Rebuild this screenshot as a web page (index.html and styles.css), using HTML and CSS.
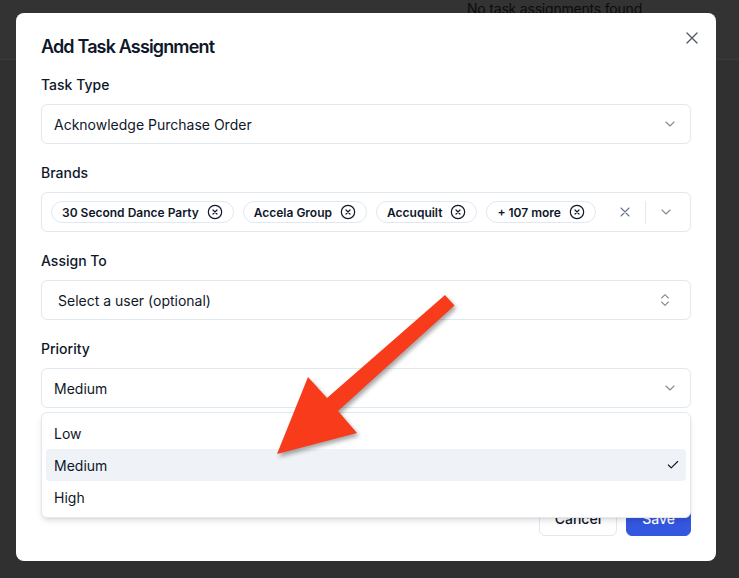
FILE: index.html
```html
<!DOCTYPE html>
<html lang="en">
<head>
    <meta charset="UTF-8">
    <meta name="viewport" content="width=device-width, initial-scale=1.0">
    <title>Add Task Assignment</title>
    <link rel="stylesheet" href="styles.css">
</head>
<body>
    <div class="page">
        <div class="page-header">
            <span class="empty-msg">No task assignments found</span>
        </div>
    </div>

    <div class="dialog">
        <button class="dialog-close" aria-label="Close">
            <svg width="12" height="12" viewBox="0 0 12 12"><path d="M1 1 11 11M11 1 1 11"/></svg>
        </button>
        <h2 class="dialog-title">Add Task Assignment</h2>

        <div class="field">
            <label>Task Type</label>
            <div class="trigger">
                <span>Acknowledge Purchase Order</span>
                <svg class="icon chevron" viewBox="0 0 24 24"><path d="m6 9 6 6 6-6"/></svg>
            </div>
        </div>

        <div class="field">
            <label>Brands</label>
            <div class="trigger multi">
                <div class="chips">
                    <span class="chip">30 Second Dance Party
                        <svg class="chip-x" viewBox="0 0 24 24"><circle cx="12" cy="12" r="10"/><path d="m15 9-6 6M9 9l6 6"/></svg>
                    </span>
                    <span class="chip">Accela Group
                        <svg class="chip-x" viewBox="0 0 24 24"><circle cx="12" cy="12" r="10"/><path d="m15 9-6 6M9 9l6 6"/></svg>
                    </span>
                    <span class="chip">Accuquilt
                        <svg class="chip-x" viewBox="0 0 24 24"><circle cx="12" cy="12" r="10"/><path d="m15 9-6 6M9 9l6 6"/></svg>
                    </span>
                    <span class="chip">+ 107 more
                        <svg class="chip-x" viewBox="0 0 24 24"><circle cx="12" cy="12" r="10"/><path d="m15 9-6 6M9 9l6 6"/></svg>
                    </span>
                </div>
                <div class="multi-actions">
                    <svg class="icon clear" viewBox="0 0 24 24"><path d="M18 6 6 18M6 6l12 12"/></svg>
                    <span class="separator"></span>
                    <svg class="icon chevron" viewBox="0 0 24 24"><path d="m6 9 6 6 6-6"/></svg>
                </div>
            </div>
        </div>

        <div class="field">
            <label>Assign To</label>
            <div class="trigger native">
                <span>Select a user (optional)</span>
                <svg class="icon updown" viewBox="0 0 24 24"><path d="m7 15 5 5 5-5M7 9l5-5 5 5"/></svg>
            </div>
        </div>

        <div class="field priority">
            <label>Priority</label>
            <div class="trigger">
                <span>Medium</span>
                <svg class="icon chevron" viewBox="0 0 24 24"><path d="m6 9 6 6 6-6"/></svg>
            </div>
            <div class="select-menu">
                <div class="option">Low</div>
                <div class="option active">Medium
                    <svg class="check" viewBox="0 0 24 24"><path d="M20 6 9 17l-5-5"/></svg>
                </div>
                <div class="option">High</div>
            </div>
        </div>

        <div class="dialog-footer">
            <button class="btn btn-outline">Cancel</button>
            <button class="btn btn-primary">Save</button>
        </div>
    </div>

    <svg class="arrow" width="739" height="578" viewBox="0 0 739 578">
        <polygon points="445,295 454.5,305.5 338,411 357,433 277,454 308,377 327,398"/>
    </svg>
</body>
</html>
```

FILE: styles.css
```css
body {
    margin: 0;
    font-family: Inter, "Noto Sans", sans-serif;
    background-color: #303030;
    color: #0f172a;
    width: 739px;
    height: 578px;
    overflow: hidden;
    position: relative;
}
.page-header {
    height: 59px;
    border-bottom: 1px solid #3a3a3a;
    background: #333;
    display: flex;
    padding-left: 467px;
}
.empty-msg {
    font-size: 14px;
    line-height: 20px;
    margin-top: -1px;
    letter-spacing: -0.2px;
    color: #0c0c0c;
}
.dialog {
    position: absolute;
    left: 16px;
    top: 13px;
    width: 700px;
    height: 548px;
    box-sizing: border-box;
    padding: 20px 25px 25px;
    background: #fff;
    border-radius: 8px;
    display: flex;
    flex-direction: column;
}
.dialog-close {
    position: absolute;
    top: 19px;
    right: 18px;
    border: none;
    background: none;
    padding: 0;
    width: 12px;
    height: 12px;
    display: flex;
}
.dialog-close svg {
    stroke: #555b66;
    stroke-width: 1.4;
    fill: none;
    stroke-linecap: round;
}
.dialog-title {
    margin: 0 0 14px;
    font-size: 18px;
    line-height: 28px;
    font-weight: 600;
    letter-spacing: -0.85px;
}
.field {
    display: flex;
    flex-direction: column;
    gap: 9px;
    margin-bottom: 19px;
}
.field label {
    font-size: 14px;
    line-height: 20px;
    font-weight: 500;
}
.trigger {
    height: 40px;
    box-sizing: border-box;
    border: 1px solid #e2e8f0;
    border-radius: 6px;
    padding: 0 12px;
    display: flex;
    align-items: center;
    justify-content: space-between;
    font-size: 14px;
}
.trigger.native {
    padding: 0 17px 0 16px;
}
.icon {
    width: 16px;
    height: 16px;
    fill: none;
    stroke: #0f172a;
    stroke-width: 2;
    stroke-linecap: round;
    stroke-linejoin: round;
}
.chevron {
    opacity: 0.5;
    stroke-width: 1.6;
}
.updown {
    opacity: 0.5;
    stroke-width: 1.6;
}
.trigger.multi {
    padding: 0 16px 0 9px;
}
.chips {
    display: flex;
    gap: 9px;
}
.chip {
    display: inline-flex;
    align-items: center;
    gap: 8px;
    height: 22px;
    box-sizing: border-box;
    padding: 0 10px;
    border: 1px solid #e2e8f0;
    border-radius: 11px;
    font-size: 12px;
    font-weight: 600;
    white-space: nowrap;
}
.chip-x {
    width: 16px;
    height: 16px;
    fill: none;
    stroke: #0f172a;
    stroke-width: 1.8;
    stroke-linecap: round;
}
.multi-actions {
    display: flex;
    align-items: center;
}
.clear {
    stroke: #64748b;
    stroke-width: 1.6;
}
.separator {
    width: 1px;
    height: 23px;
    background: #e2e8f0;
    margin: 0 12px 0 12px;
}
.priority {
    position: relative;
}
.select-menu {
    position: absolute;
    top: calc(100% + 4px);
    left: 0;
    right: 0;
    z-index: 2;
    background: #fff;
    border: 1px solid #e2e8f0;
    border-radius: 6px;
    padding: 4px;
    box-shadow: 0 4px 6px -1px rgba(0, 0, 0, 0.1), 0 2px 4px -2px rgba(0, 0, 0, 0.1);
}
.option {
    height: 32px;
    display: flex;
    align-items: center;
    justify-content: space-between;
    padding: 0 6px 0 8px;
    border-radius: 4px;
    font-size: 14px;
}
.option.active {
    background: #eff2f6;
}
.check {
    width: 14px;
    height: 14px;
    fill: none;
    stroke: #0f172a;
    stroke-width: 2;
    stroke-linecap: round;
    stroke-linejoin: round;
}
.dialog-footer {
    margin-top: auto;
    display: flex;
    justify-content: flex-end;
    gap: 9px;
}
.btn {
    height: 36px;
    padding: 0 15px;
    border-radius: 6px;
    font-family: inherit;
    font-size: 14px;
    font-weight: 500;
}
.btn-outline {
    background: #fff;
    border: 1px solid #e2e8f0;
    color: #0f172a;
}
.btn-primary {
    background: #3457e0;
    border: 1px solid #3457e0;
    color: #fff;
}
.arrow {
    position: absolute;
    left: 0;
    top: 0;
    z-index: 5;
    pointer-events: none;
}
.arrow polygon {
    fill: #f83b1b;
    filter: drop-shadow(2px 3px 2px rgba(0, 0, 0, 0.35));
}
```
